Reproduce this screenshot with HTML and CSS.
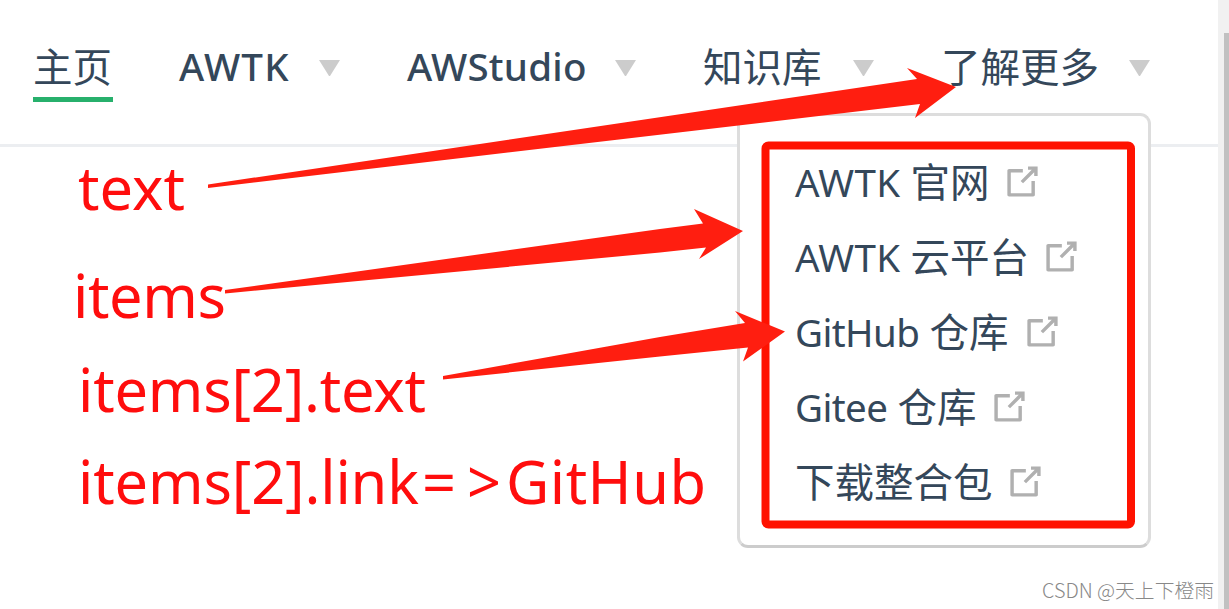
FILE: index.html
```html
<!DOCTYPE html>
<html lang="zh-CN">
<head>
<meta charset="utf-8">
<title>AWTK</title>
<link rel="stylesheet" href="styles.css">
</head>
<body>
<svg class="symbols" aria-hidden="true">
  <symbol id="outbound" viewBox="0 0 100 100">
    <path d="M18.8,85.1h56l0,0c2.2,0,4-1.8,4-4v-32h-8v28h-48v-48h28v-8h-32l0,0c-2.2,0-4,1.8-4,4v56C14.8,83.3,16.6,85.1,18.8,85.1z"/>
    <polygon points="45.7,48.7 51.3,54.3 77.2,28.5 77.2,37.2 85.2,37.2 85.2,14.9 62.8,14.9 62.8,22.9 71.5,22.9"/>
  </symbol>
</svg>
<div class="page">
  <header class="navbar">
    <nav class="nav">
      <a class="nav-item home active"><span>主页</span></a>
      <a class="nav-item awtk"><span class="label latin">AWTK</span><i class="arrow"></i></a>
      <a class="nav-item studio"><span class="label latin">AWStudio</span><i class="arrow"></i></a>
      <a class="nav-item wiki"><span class="label">知识库</span><i class="arrow"></i></a>
      <a class="nav-item more"><span class="label">了解更多</span><i class="arrow"></i></a>
    </nav>
  </header>
  <ul class="dropdown">
    <li><span class="r1"><b class="caps">AWTK</b> 官网</span><svg class="out"><use href="#outbound"/></svg></li>
    <li><span class="r2"><b class="caps">AWTK</b> 云平台</span><svg class="out"><use href="#outbound"/></svg></li>
    <li><span class="r3"><b>GitHub</b> 仓库</span><svg class="out"><use href="#outbound"/></svg></li>
    <li><span class="r4"><b>Gitee</b> 仓库</span><svg class="out"><use href="#outbound"/></svg></li>
    <li><span class="r5">下载整合包</span><svg class="out"><use href="#outbound"/></svg></li>
  </ul>
  <div class="scrollbar"><div class="thumb"></div></div>
  <svg class="notes" viewBox="0 0 1229 609">
    <rect class="frame" x="765.5" y="145.5" width="365.500" height="379" rx="3"/>
    <g class="pointers">
      <path d="M208 184.500L917 79L907 68L956 87L915 118L920 104L208 188Z"/>
      <path d="M225 290L660 229L703 223.500L694 209L743 231L699 259L706 247.500L660 252.500L225 293.500Z"/>
      <path d="M443 376L660 337L745 323L735 311L785 331.500L743 361.500L748 347.500L660 356.500L443 379.500Z"/>
    </g>
    <g class="captions">
      <text x="78" y="210" textLength="107">text</text>
      <text x="73" y="318" textLength="153">items</text>
      <text x="78" y="412" textLength="348">items[2].text</text>
      <text y="503.500"><tspan x="78" textLength="341">items[2].link</tspan><tspan x="422">=</tspan><tspan x="467">&gt;</tspan><tspan x="506" textLength="200">GitHub</tspan></text>
    </g>
  </svg>
  <div class="watermark">CSDN @天上下橙雨</div>
</div>
</body>
</html>
```
FILE: styles.css
```css
* { box-sizing: border-box; }
body { margin: 0; background: #fff; }
.symbols { position: absolute; width: 0; height: 0; }
.page {
  position: relative;
  width: 1229px;
  height: 609px;
  overflow: hidden;
  background: #fff;
  color: #34475a;
  font-family: "Noto Sans", "Noto Sans CJK SC", sans-serif;
  font-size: 39.500px;
}
.navbar { width: 1218px; height: 147px; padding: 36px 0 0 33px; border-bottom: 3px solid #eceef1; }
.nav { display: flex; }
.nav-item { display: flex; flex: none; align-items: center; height: 66px; padding-bottom: 3px; margin-right: 67px; white-space: nowrap; }
.nav-item span { line-height: 63px; }
.home { width: 80px; margin-right: 66px; border-bottom: 5px solid #27b06c; padding-bottom: 0; }
.home span { line-height: 62px; }
.label { flex: none; }
.nav-item .latin { font-size: 38.500px; font-weight: 500; line-height: 61px; padding-bottom: 2px; }
.awtk .label { width: 110px; letter-spacing: 1.200px; }
.studio .label { width: 179px; letter-spacing: 0.250px; }
.wiki .label { width: 120px; }
.more .label { width: 158px; }
.studio { margin-right: 67px; }
.wiki { margin-right: 67px; }
.more { margin-right: 0; }
.arrow { margin-left: 30px; margin-top: 1px; border: 10.500px solid transparent; border-top: 16px solid #ccc; border-bottom: 0; width: 21px; }
.studio .arrow { margin-left: 29px; }
.dropdown {
  position: absolute;
  left: 737px;
  top: 113px;
  width: 414px;
  height: 435px;
  margin: 0;
  padding: 29px 0 0 55px;
  list-style: none;
  background: #fff;
  border: 3px solid #ddd;
  border-bottom-color: #ccc;
  border-radius: 11px;
}
.dropdown li { display: flex; align-items: center; height: 75px; white-space: nowrap; }
.dropdown b { font-weight: 400; font-size: 38.500px; letter-spacing: -0.600px; }
.dropdown .caps { letter-spacing: 0.300px; }
.dropdown span { line-height: 75px; }
.r1 { width: 206px; }
.r2 { width: 244.500px; }
.r3 { width: 225.500px; }
.r4 { width: 192.500px; }
.r5 { width: 209px; }
.out { width: 43px; height: 43px; fill: #b0b0b0; margin-bottom: 2px; }
.scrollbar { position: absolute; right: 0; top: 0; width: 11px; height: 609px; background: #f1f1f1; padding: 33px 0 0 6px; }
.thumb { height: 576px; background: #c1c1c1; }
.notes { position: absolute; left: 0; top: 0; width: 1229px; height: 609px; }
.frame { fill: none; stroke: #ff1200; stroke-width: 8px; }
.pointers { fill: #ff1e10; }
.captions { fill: #ff0d0d; font-family: "Noto Sans", sans-serif; font-size: 59.500px; }
.watermark {
  position: absolute;
  right: 15px;
  bottom: 7px;
  color: #888;
  font-family: "Noto Sans CJK SC", sans-serif;
  font-size: 19.800px;
  font-weight: 300;
  line-height: 24px;
  white-space: nowrap;
}
```
